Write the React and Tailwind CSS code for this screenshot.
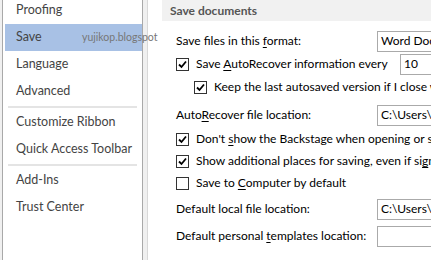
import React from "react";

const Check = ({ checked }) => (
  <span className="w-[13px] h-[13px] border border-[#333] bg-white flex items-center justify-center shrink-0">
    {checked && (
      <svg width="9" height="9" viewBox="0 0 9 9">
        <path d="M1 4.5 L3.5 7 L8 1.5" fill="none" stroke="#000" strokeWidth="1.8" />
      </svg>
    )}
  </span>
);

const U = ({ children }) => <span className="underline underline-offset-2">{children}</span>;

const Field = ({ children }) => (
  <div className="h-[21px] w-[120px] border border-[#aaa] bg-white px-[3px] flex items-center text-black shrink-0 overflow-hidden">
    {children}
  </div>
);

const navGroups = [
  ["Proofing", "Save", "Language", "Advanced"],
  ["Customize Ribbon", "Quick Access Toolbar"],
  ["Add-Ins", "Trust Center"],
];

const App = () => {
  return (
    <div
      className="w-[431px] h-[260px] overflow-hidden flex bg-[#f0f0f0] relative text-[12px]"
      style={{ fontFamily: 'Lato, "Noto Sans", sans-serif' }}
    >
      <div className="w-[2px] shrink-0" />
      {/* left nav */}
      <div className="w-[141px] shrink-0 bg-white border-x border-[#a9a9a9] text-[#444] text-[12.5px] whitespace-nowrap">
        <div className="-mt-[3px]">
          {navGroups.map((group, gi) => (
            <div key={gi}>
              {gi > 0 && <div className="mx-[5px] my-[1px] h-[2px] bg-[#e4e4e4]" />}
              {group.map((item) => (
                <div
                  key={item}
                  className={
                    "h-[27px] flex items-center pl-[11px] ml-[2px] " +
                    (item === "Save" ? "bg-[#a8c1e5]" : "")
                  }
                >
                  {item}
                </div>
              ))}
            </div>
          ))}
        </div>
      </div>
      <div className="w-[5px] shrink-0 border-r border-[#d8d8d8]" />
      {/* content */}
      <div className="flex-1 bg-white pl-[14px] min-w-0">
        <div className="h-[21px] bg-[#f1f1f1] flex items-center pl-[8px] font-bold text-[#555]">
          Save documents
        </div>
        <div className="pl-[14px] pt-[9px] text-black whitespace-nowrap">
          <div className="flex items-center h-[22px]">
            <span className="w-[201px] shrink-0">
              Save files in this <U>f</U>ormat:
            </span>
            <Field>Word Document (*.docx)</Field>
          </div>
          <div className="flex items-center h-[22px] mt-[1px]">
            <Check checked />
            <span className="ml-[7px] w-[204px] shrink-0">
              Save <U>A</U>utoRecover information every
            </span>
            <Field>10</Field>
          </div>
          <div className="flex items-center h-[22px] pl-[18px] mt-[1px]">
            <Check checked />
            <span className="ml-[7px]">Keep the last autosaved version if I close without saving</span>
          </div>
          <div className="flex items-center h-[22px] mt-[6px]">
            <span className="w-[201px] shrink-0">
              Auto<U>R</U>ecover file location:
            </span>
            <Field>C:\Users\yujikop\AppData</Field>
          </div>
          <div className="flex items-center h-[22px] mt-[2px]">
            <Check checked />
            <span className="ml-[7px]">
              Don't <U>s</U>how the Backstage when opening or saving files
            </span>
          </div>
          <div className="flex items-center h-[22px]">
            <Check checked />
            <span className="ml-[7px]">
              Show additional places for saving, even if si<U>g</U>n-in may be required
            </span>
          </div>
          <div className="flex items-center h-[22px]">
            <Check />
            <span className="ml-[7px]">
              Save to <U>C</U>omputer by default
            </span>
          </div>
          <div className="flex items-center h-[22px] mt-[4px]">
            <span className="w-[201px] shrink-0">
              Default local f<U>i</U>le location:
            </span>
            <Field>C:\Users\yujikop\Documents</Field>
          </div>
          <div className="flex items-center h-[22px] mt-[5px]">
            <span className="w-[201px] shrink-0">
              Default personal <U>t</U>emplates location:
            </span>
            <Field>&nbsp;</Field>
          </div>
        </div>
      </div>
      <div className="absolute left-[82px] top-[30px] text-[10.5px] text-[#777]">yujikop.blogspot</div>
    </div>
  );
};

export default App;
